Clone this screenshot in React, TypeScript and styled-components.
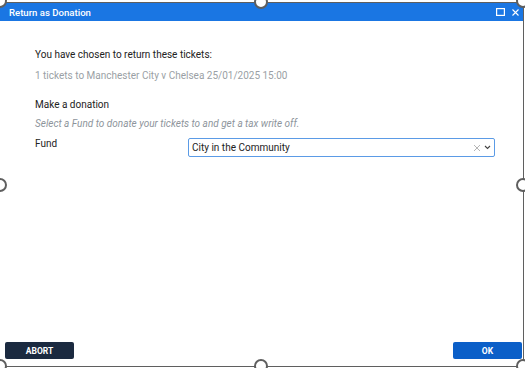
import styled, { createGlobalStyle } from "styled-components";

const GlobalStyle = createGlobalStyle`
  html, body {
    margin: 0;
    padding: 0;
    background: #ffffff;
    font-family: Roboto, "Liberation Sans", sans-serif;
    overflow: hidden;
  }
`;

const Stage = styled.div`
  position: relative;
  width: 525px;
  height: 368px;
  padding-top: 2px;
  box-sizing: border-box;
`;

const Frame = styled.div`
  display: flex;
  flex-direction: column;
  box-sizing: border-box;
  margin-left: -2px;
  width: 526px;
  height: 365px;
  border: 1.5px solid #5f5f5f;
  background: #ffffff;
`;

const TitleBar = styled.div`
  display: flex;
  align-items: center;
  justify-content: space-between;
  height: 18px;
  padding: 0 4px 0 10px;
  background: #1a76e3;
  color: #ffffff;
`;

const Title = styled.span`
  font-size: 9.6px;
  font-weight: 500;
`;

const TitleIcons = styled.div`
  display: flex;
  align-items: center;
  gap: 7px;
`;

const Body = styled.div`
  flex: 1;
  display: flex;
  flex-direction: column;
  padding: 27px 28px 0 36px;
  font-size: 10px;
  color: #222222;
`;

const Line = styled.div<{ $tone?: "muted" | "hint"; $gap?: number }>`
  margin-top: ${(p) => p.$gap ?? 0}px;
  line-height: 14px;
  color: ${(p) =>
    p.$tone === "muted" ? "#9a9fa5" : p.$tone === "hint" ? "#8d949b" : "#222222"};
  font-style: ${(p) => (p.$tone === "hint" ? "italic" : "normal")};
`;

const FieldRow = styled.div`
  display: grid;
  grid-template-columns: 153px 307px;
  align-items: start;
  margin-top: 6px;
`;

const FieldLabel = styled.label`
  line-height: 14px;
`;

const Select = styled.div`
  display: flex;
  align-items: center;
  height: 19px;
  box-sizing: border-box;
  margin-top: 1px;
  padding: 0 3px 0 3px;
  border: 1px solid #5b9be6;
  border-radius: 2px;
  font-size: 10px;
  color: #222222;
`;

const SelectValue = styled.span`
  flex: 1;
`;

const SelectIcons = styled.span`
  display: flex;
  align-items: center;
  gap: 3px;
`;

const Footer = styled.div`
  display: flex;
  justify-content: space-between;
  padding: 0 1px 7px 6px;
`;

const Button = styled.button<{ $variant: "dark" | "primary" }>`
  width: 69px;
  height: 17px;
  border: none;
  border-radius: 2px;
  background: ${(p) => (p.$variant === "dark" ? "#1b2a40" : "#0b5fc8")};
  color: #ffffff;
  font-family: Roboto, "Liberation Sans", sans-serif;
  font-size: 8.5px;
  font-weight: 700;
  padding: 0;
  cursor: pointer;
`;

const Handle = styled.span<{ $x: number; $y: number }>`
  position: absolute;
  left: ${(p) => p.$x - 7}px;
  top: ${(p) => p.$y - 7}px;
  width: 10px;
  height: 10px;
  border: 2px solid #5f5f5f;
  border-radius: 50%;
  background: #ffffff;
`;

const handles = [
  [0, 1],
  [261, 2],
  [523, 1],
  [0, 185],
  [523, 185],
  [0, 366],
  [261, 366],
  [523, 366],
];

export default function App() {
  return (
    <>
      <GlobalStyle />
      <Stage>
        <Frame>
          <TitleBar>
            <Title>Return as Donation</Title>
            <TitleIcons>
              <svg width="9" height="8" viewBox="0 0 9 8">
                <rect x="0.6" y="0.6" width="7.8" height="6.8" fill="none" stroke="#fff" strokeWidth="1.2" />
              </svg>
              <svg width="7" height="7" viewBox="0 0 7 7">
                <path d="M0.5 0.5L6.5 6.5M6.5 0.5L0.5 6.5" stroke="#fff" strokeWidth="1.1" />
              </svg>
            </TitleIcons>
          </TitleBar>
          <Body>
            <Line>You have chosen to return these tickets:</Line>
            <Line $tone="muted" $gap={7}>
              1 tickets to Manchester City v Chelsea 25/01/2025 15:00
            </Line>
            <Line $gap={15}>Make a donation</Line>
            <Line $tone="hint" $gap={5}>
              Select a Fund to donate your tickets to and get a tax write off.
            </Line>
            <FieldRow>
              <FieldLabel>Fund</FieldLabel>
              <Select>
                <SelectValue>City in the Community</SelectValue>
                <SelectIcons>
                  <svg width="8" height="8" viewBox="0 0 8 8">
                    <path d="M1 1L7 7M7 1L1 7" stroke="#b5b5b5" strokeWidth="1" />
                  </svg>
                  <svg width="7" height="5" viewBox="0 0 7 5">
                    <path d="M1 1L3.5 3.5L6 1" fill="none" stroke="#444" strokeWidth="1.1" />
                  </svg>
                </SelectIcons>
              </Select>
            </FieldRow>
          </Body>
          <Footer>
            <Button $variant="dark">ABORT</Button>
            <Button $variant="primary">OK</Button>
          </Footer>
        </Frame>
        {handles.map(([x, y]) => (
          <Handle key={`${x}-${y}`} $x={x} $y={y} />
        ))}
      </Stage>
    </>
  );
}
